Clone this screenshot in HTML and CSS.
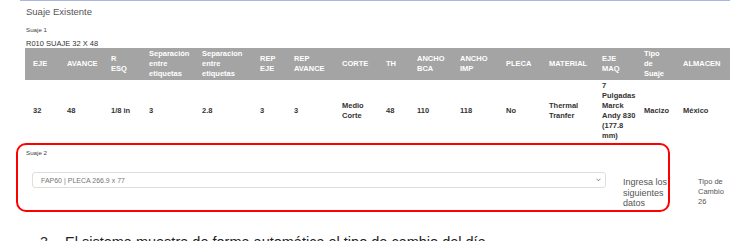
FILE: index.html
```html
<!DOCTYPE html>
<html lang="es">

<head>
    <meta charset="UTF-8">
    <title>Suaje Existente</title>
    <link rel="stylesheet" href="styles.css">
</head>

<body>
    <div class="top-rule"></div>
    <div class="content">
        <h3 class="section-title">Suaje Existente</h3>
        <label class="field-label label-first">Suaje 1</label>
        <div class="suaje-name">R010 SUAJE 32 X 48</div>

        <table class="suaje-table">
            <colgroup>
                <col style="width:34px">
                <col style="width:44px">
                <col style="width:38px">
                <col style="width:53px">
                <col style="width:58px">
                <col style="width:34px">
                <col style="width:48px">
                <col style="width:44px">
                <col style="width:31px">
                <col style="width:43px">
                <col style="width:46px">
                <col style="width:43px">
                <col style="width:53px">
                <col style="width:42px">
                <col style="width:39px">
                <col style="width:70px">
            </colgroup>
            <thead>
                <tr>
                    <th>EJE</th>
                    <th>AVANCE</th>
                    <th>R<br>ESQ</th>
                    <th>Separación<br>entre<br>etiquetas</th>
                    <th>Separacion<br>entre<br>etiquetas</th>
                    <th>REP<br>EJE</th>
                    <th>REP<br>AVANCE</th>
                    <th>CORTE</th>
                    <th>TH</th>
                    <th>ANCHO<br>BCA</th>
                    <th>ANCHO<br>IMP</th>
                    <th>PLECA</th>
                    <th>MATERIAL</th>
                    <th>EJE<br>MAQ</th>
                    <th>Tipo<br>de<br>Suaje</th>
                    <th>ALMACEN</th>
                </tr>
            </thead>
            <tbody>
                <tr>
                    <td>32</td>
                    <td>48</td>
                    <td>1/8 in</td>
                    <td>3</td>
                    <td>2.8</td>
                    <td>3</td>
                    <td>3</td>
                    <td>Medio<br>Corte</td>
                    <td>48</td>
                    <td>110</td>
                    <td>118</td>
                    <td>No</td>
                    <td>Thermal<br>Tranfer</td>
                    <td>7<br>Pulgadas<br>Marck<br>Andy 830<br>(177.8<br>mm)</td>
                    <td>Macizo</td>
                    <td>México</td>
                </tr>
            </tbody>
        </table>

        <div class="suaje-row">
            <div class="suaje-field">
                <label class="field-label">Suaje 2</label>
                <div class="select">
                    <span>FAP60 | PLECA 266.9 x 77</span>
                    <svg width="5" height="4" viewBox="0 0 5 4"><path d="M0.6 0.8 L2.5 2.8 L4.4 0.8" fill="none" stroke="#777" stroke-width="0.9"/></svg>
                </div>
            </div>
            <div class="hint">Ingresa los<br>siguientes<br>datos</div>
            <div class="rate">Tipo de<br>Cambio<br>26</div>
        </div>
    </div>

    <div class="highlight"></div>

    <div class="step">
        <span class="step-num">3.</span>
        <span>El sistema muestra de forma automática el tipo de cambio del día</span>
    </div>
</body>

</html>
```

FILE: styles.css
```css
* {
    margin: 0;
    padding: 0;
    box-sizing: border-box;
}

body {
    position: relative;
    width: 730px;
    height: 241px;
    overflow: hidden;
    background: #fff;
    font-family: "Liberation Sans", Arial, sans-serif;
    color: #333;
}

.top-rule {
    margin-left: 20px;
    border-top: 1px solid #a9b6de;
}

.content {
    padding-left: 25px;
}

.section-title {
    margin: 5px 0 0 1px;
    font-size: 9.5px;
    line-height: 12px;
    font-weight: normal;
    color: #555;
}

.field-label {
    display: block;
    margin-left: 1px;
    font-size: 6.2px;
    line-height: 8px;
    color: #444;
}

.label-first {
    margin-top: 7.5px;
}

.suaje-name {
    margin: 5.5px 0 0 1px;
    font-size: 7.5px;
    line-height: 9px;
    color: #333;
}

.suaje-table {
    width: 720px;
    border-collapse: collapse;
    table-layout: fixed;
}

.suaje-table th,
.suaje-table td {
    padding: 1px 0 1px 8px;
    font-size: 7.5px;
    line-height: 10px;
    font-weight: bold;
    text-align: left;
    vertical-align: middle;
    white-space: nowrap;
}

.suaje-table th {
    background: #a4a4a4;
    color: #fff;
}

.suaje-table td {
    color: #333;
}

.suaje-row {
    display: flex;
    margin-top: 7px;
}

.suaje-field {
    width: 582px;
}

.select {
    display: flex;
    align-items: center;
    justify-content: space-between;
    width: 574px;
    height: 16px;
    margin: 15px 0 0 7px;
    padding: 0 4px 0 8px;
    border: 1px solid #dedede;
    border-radius: 3px;
    font-size: 7px;
    color: #777;
}

.hint {
    width: 75px;
    margin: 28px 0 0 16px;
    font-size: 9px;
    line-height: 10.5px;
    color: #555;
}

.rate {
    margin-top: 28px;
    font-size: 7.5px;
    line-height: 10px;
    color: #555;
}

.highlight {
    position: absolute;
    left: 16px;
    top: 143px;
    width: 654px;
    height: 69px;
    border: 2px solid #f00;
    border-radius: 10px;
}

.step {
    display: flex;
    margin-top: 23px;
    padding-left: 40px;
    font-size: 14.5px;
    line-height: 20px;
    color: #222;
}

.step-num {
    width: 25px;
}
```
